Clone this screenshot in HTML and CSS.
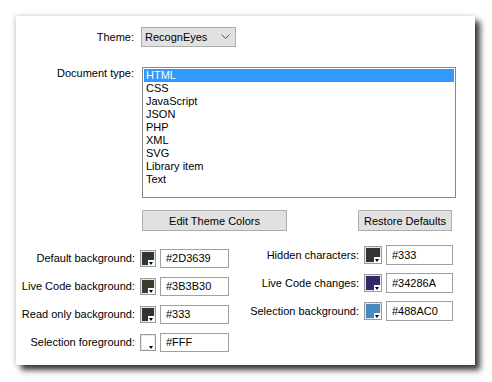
FILE: index.html
```html
<!DOCTYPE html>
<html>
<head>
<meta charset="utf-8">
<link rel="stylesheet" href="styles.css">
</head>
<body>
<div class="panel">
  <div class="row theme-row">
    <div class="label">Theme:</div>
    <div class="select">
      <span>RecognEyes</span>
      <svg class="chev" width="9" height="6" viewBox="0 0 9 6"><path d="M0.5 0.5 L4.5 4.5 L8.5 0.5" fill="none" stroke="#555" stroke-width="1"/></svg>
    </div>
  </div>
  <div class="row doc-row">
    <div class="label label-top">Document type:</div>
    <div class="listbox">
      <div class="item selected">HTML</div>
      <div class="item">CSS</div>
      <div class="item">JavaScript</div>
      <div class="item">JSON</div>
      <div class="item">PHP</div>
      <div class="item">XML</div>
      <div class="item">SVG</div>
      <div class="item">Library item</div>
      <div class="item">Text</div>
    </div>
  </div>
  <div class="btn-row">
    <button class="btn edit">Edit Theme Colors</button>
    <button class="btn restore">Restore Defaults</button>
  </div>
  <div class="colors">
    <div class="col col-left">
      <div class="crow"><div class="clabel">Default background:</div><div class="swatch" style="background:#2D3639"><span class="corner"></span></div><div class="cinput">#2D3639</div></div>
      <div class="crow"><div class="clabel">Live Code background:</div><div class="swatch" style="background:#3B3B30"><span class="corner"></span></div><div class="cinput">#3B3B30</div></div>
      <div class="crow"><div class="clabel">Read only background:</div><div class="swatch" style="background:#333333"><span class="corner"></span></div><div class="cinput">#333</div></div>
      <div class="crow"><div class="clabel">Selection foreground:</div><div class="swatch" style="background:#FFFFFF"><span class="corner"></span></div><div class="cinput">#FFF</div></div>
    </div>
    <div class="col col-right">
      <div class="crow"><div class="clabel">Hidden characters:</div><div class="swatch" style="background:#333333"><span class="corner"></span></div><div class="cinput">#333</div></div>
      <div class="crow"><div class="clabel">Live Code changes:</div><div class="swatch" style="background:#34286A"><span class="corner"></span></div><div class="cinput">#34286A</div></div>
      <div class="crow"><div class="clabel">Selection background:</div><div class="swatch" style="background:#488AC0"><span class="corner"></span></div><div class="cinput">#488AC0</div></div>
    </div>
  </div>
</div>
</body>
</html>
```
FILE: styles.css
```css
html, body {
  margin: 0;
  padding: 0;
  background: #fff;
}
body {
  padding: 16px;
  font-family: "Liberation Sans", Arial, sans-serif;
  font-size: 11px;
  color: #000;
}
.panel {
  width: 459px;
  height: 349px;
  box-sizing: border-box;
  background: #fff;
  box-shadow: 5px 5px 6px rgba(0,0,0,0.78), -1px 0 5px rgba(0,0,0,0.18);
  padding-top: 11px;
}
.row {
  display: flex;
  align-items: center;
}
.label {
  width: 118px;
  text-align: right;
  box-sizing: border-box;
}
.theme-row .select {
  margin-left: 7px;
  width: 95px;
  height: 20px;
  box-sizing: border-box;
  border: 1px solid #adadad;
  background: #e1e1e1;
  display: flex;
  align-items: center;
  justify-content: space-between;
  padding: 0 5px 0 3px;
  font-size: 11px;
}
.chev { display: block; }
.doc-row {
  margin-top: 20px;
  align-items: flex-start;
}
.doc-row .label { line-height: 12px; }
.listbox {
  margin-left: 8px;
  width: 314px;
  height: 131px;
  box-sizing: border-box;
  border: 1px solid #828790;
  padding: 1px;
  font-size: 11px;
}
.item {
  height: 13px;
  line-height: 13px;
  padding-left: 2px;
}
.item.selected {
  background: #3399ff;
  color: #fff;
}
.btn-row {
  display: flex;
  margin-top: 12px;
  padding-left: 126px;
}
.btn {
  height: 21px;
  box-sizing: border-box;
  border: 1px solid #adadad;
  background: #e1e1e1;
  font-family: "Liberation Sans", Arial, sans-serif;
  font-size: 11px;
  color: #000;
  padding: 0;
  margin: 0;
}
.btn.edit { width: 145px; }
.btn.restore { width: 94px; margin-left: 71px; }
.colors {
  display: flex;
  margin-top: 14px;
}
.col {
  display: flex;
  flex-direction: column;
  gap: 8px;
}
.col-left { margin-top: 3px; }
.crow {
  display: flex;
  align-items: center;
  height: 20px;
}
.clabel {
  text-align: right;
  white-space: nowrap;
}
.col-left .clabel { width: 119px; }
.col-right .clabel { width: 130px; }
.swatch {
  position: relative;
  width: 16px;
  height: 17px;
  box-sizing: border-box;
  border: 1px solid #9a9a9a;
  box-shadow: inset 0 0 0 1px #e8e8e8;
  margin-left: 5px;
}
.col-right .swatch { width: 18px; height: 18px; }
.corner {
  position: absolute;
  right: 0;
  bottom: 0;
  width: 7px;
  height: 6px;
  background: #fff;
}
.corner::after {
  content: "";
  position: absolute;
  left: 1px;
  top: 2px;
  border-left: 2.5px solid transparent;
  border-right: 2.5px solid transparent;
  border-top: 3px solid #000;
}
.cinput {
  margin-left: 4px;
  width: 69px;
  height: 19px;
  box-sizing: border-box;
  border: 1px solid #a0a0a0;
  padding-left: 5px;
  line-height: 17px;
  font-size: 11px;
}
.col-right .cinput { width: 67px; height: 20px; line-height: 18px; }
```
